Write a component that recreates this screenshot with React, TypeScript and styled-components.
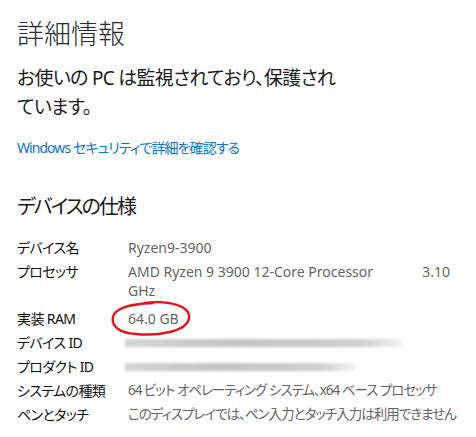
import React from 'react';
import styled, { createGlobalStyle } from 'styled-components';

interface Spec {
  label: string;
  value?: React.ReactNode;
  redacted?: number;
  circled?: boolean;
  tight?: boolean;
}

const App: React.FC = () => {
  const specs: Spec[] = [
    { label: 'デバイス名', value: 'Ryzen9-3900' },
    {
      label: 'プロセッサ',
      value: (
        <>
          <FirstLine>
            <span>AMD Ryzen 9 3900 12-Core Processor</span>
            <span>3.10</span>
          </FirstLine>
          <WrappedLine>GHz</WrappedLine>
        </>
      ),
    },
    { label: '実装 RAM', value: '64.0 GB', circled: true },
    { label: 'デバイス ID', redacted: 277 },
    { label: 'プロダクト ID', redacted: 230 },
    { label: 'システムの種類', value: '64 ビット オペレーティング システム、x64 ベース プロセッサ', tight: true },
    { label: 'ペンとタッチ', value: 'このディスプレイでは、ペン入力とタッチ入力は利用できません', tight: true },
  ];

  return (
    <Page>
      <GlobalStyle />
      <Title>詳細情報</Title>
      <Status>お使いの PC は監視されており、保護されています。</Status>
      <Link href="#">Windows セキュリティで詳細を確認する</Link>

      <SectionTitle>デバイスの仕様</SectionTitle>

      <SpecList>
        {specs.map((s) => (
          <SpecRow key={s.label}>
            <Label>{s.label}</Label>
            <Value $tight={s.tight}>
              {s.redacted ? <Redacted $width={s.redacted} /> : s.value}
              {s.circled && (
                <Circle viewBox="0 0 80 36" width={80} height={36}>
                  <path
                    d="M34 2 C58 -1 80 5 78 17 C76 31 46 35 25 33 C8 32 0 25 2 16 C4 7 18 3 42 2"
                    fill="none"
                    stroke="#e8101a"
                    strokeWidth={2.4}
                    strokeLinecap="round"
                  />
                </Circle>
              )}
            </Value>
          </SpecRow>
        ))}
      </SpecList>
    </Page>
  );
};

export default App;

// Styles
const GlobalStyle = createGlobalStyle`
  html, body {
    margin: 0;
    padding: 0;
    background: #ffffff;
  }
  body {
    font-family: "Noto Sans", "Noto Sans CJK JP", sans-serif;
    font-feature-settings: "palt";
    color: #1a1a1a;
  }
`;

const Page = styled.div`
  width: 476px;
  height: 437px;
  box-sizing: border-box;
  padding: 13px 0 0 17px;
  overflow: hidden;
`;

const Title = styled.h1`
  margin: 0;
  font-family: "Noto Sans CJK JP", sans-serif;
  font-size: 27px;
  font-weight: 300;
  line-height: 40px;
  color: #2a2a2a;
`;

const Status = styled.p`
  margin: 11px 0 0;
  width: 330px;
  font-size: 19px;
  font-weight: 400;
  line-height: 29px;
  letter-spacing: -0.7px;
  color: #1a1a1a;
`;

const Link = styled.a`
  display: block;
  margin-top: 16px;
  font-size: 14px;
  line-height: 20px;
  letter-spacing: -0.95px;
  color: #0a74d4;
  text-decoration: none;
`;

const SectionTitle = styled.h2`
  margin: 35px 0 0;
  font-size: 20px;
  font-weight: 400;
  line-height: 28px;
  letter-spacing: -2px;
  color: #1a1a1a;
`;

const SpecList = styled.div`
  margin-top: 17px;
  display: flex;
  flex-direction: column;
  gap: 5px;
`;

const SpecRow = styled.div`
  display: grid;
  grid-template-columns: 111px 340px;
  font-size: 14px;
  line-height: 19px;
`;

const Label = styled.div`
  color: #111;
  white-space: nowrap;
  letter-spacing: -0.6px;
`;

const Value = styled.div<{ $tight?: boolean }>`
  position: relative;
  color: #646464;
  white-space: nowrap;
  min-height: 19px;
  font-size: ${(p) => (p.$tight ? '13.5px' : '14px')};
  letter-spacing: ${(p) => (p.$tight ? '-1px' : '0')};
`;

const FirstLine = styled.div`
  display: flex;
  justify-content: space-between;
  width: 322px;
`;

const WrappedLine = styled.div`
  margin-bottom: 4px;
`;

const Redacted = styled.div<{ $width: number }>`
  width: ${(p) => p.$width}px;
  height: 8px;
  margin: 6px 0 0 -3px;
  background: linear-gradient(to right, #d4d4d4, #c2c2c2 40%, #cfcfcf 85%, #f2f2f2);
  filter: blur(1.5px);
`;

const Circle = styled.svg`
  position: absolute;
  left: -17px;
  top: -8px;
  pointer-events: none;
`;
